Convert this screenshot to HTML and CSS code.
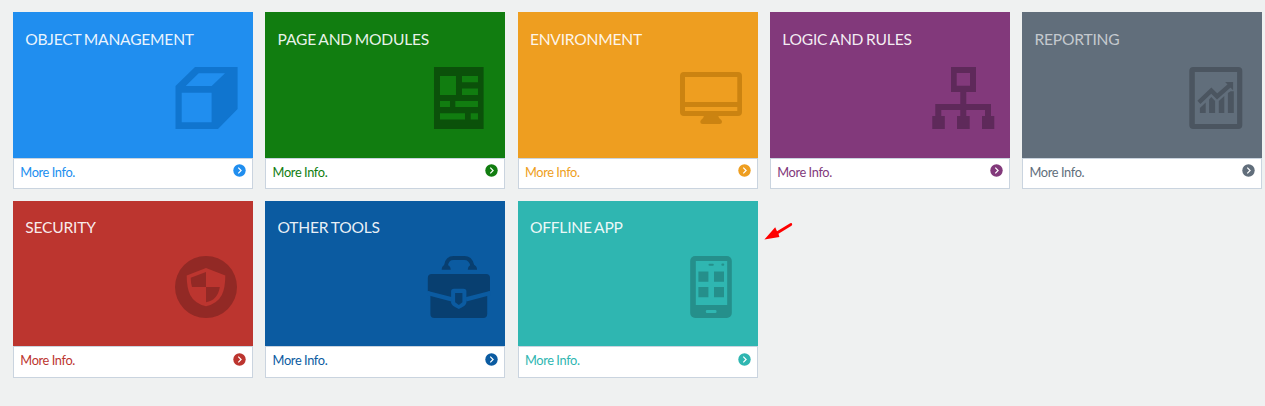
FILE: index.html
```html
<!DOCTYPE html>
<html lang="en">
<head>
<meta charset="utf-8">
<title>Dashboard</title>
<link rel="stylesheet" href="styles.css">
</head>
<body>
<svg class="defs" width="0" height="0"><symbol id="go" viewBox="0 0 13 13"><circle cx="6.5" cy="6.5" r="6.2" fill="currentColor"/><path d="M5.3 3.7 8.1 6.5 5.3 9.3" fill="none" stroke="#fff" stroke-width="1.2"/></symbol></svg>
<main class="tiles">
  <section class="tile blue">
    <div class="face"><h2>OBJECT MANAGEMENT</h2>
      <svg class="icon" viewBox="0 0 62 62"><path fill-rule="evenodd" d="M20 0H62.6V42L43 62H.5V19ZM23.7 6.3 10.7 19H36.7L50 6.3ZM6.7 25.7V55.3H36.6V25.7Z"/></svg>
    </div>
    <a class="more"><span>More Info.</span><svg class="go"><use href="#go"/></svg></a>
  </section>
  <section class="tile green">
    <div class="face"><h2>PAGE AND MODULES</h2>
      <svg class="icon" viewBox="-.3 0 62 62"><path fill-rule="evenodd" d="M6.7 0h49.6v62h-49.6ZM12.7 9v19h16V9ZM34.7 9v6.3h16V9ZM34.7 21.6v6.3h16v-6.3ZM12.7 34v6h10v-6ZM28 34v6h22.7v-6ZM12.7 46.3v6.3h25v-6.3ZM43.4 46.3v6.3h7.3v-6.3Z"/></svg>
    </div>
    <a class="more"><span>More Info.</span><svg class="go"><use href="#go"/></svg></a>
  </section>
  <section class="tile orange">
    <div class="face"><h2>ENVIRONMENT</h2>
      <svg class="icon" viewBox=".4 0 62 62"><path fill-rule="evenodd" d="M4.4 5H58.4a4 4 0 0 1 4 4V45a4 4 0 0 1-4 4H4.4a4 4 0 0 1-4-4V9a4 4 0 0 1 4-4ZM5.4 10V35H57.7V10ZM5.4 40v4H57.7v-4Z"/><path d="M24.3 49H38.7Q39 51.5 41.4 52.7 42.4 53.5 42.4 55 42.3 57 40 57H23Q20.7 57 20.7 55 20.7 53.5 21.7 52.7 24 51.5 24.3 49Z"/></svg>
    </div>
    <a class="more"><span>More Info.</span><svg class="go"><use href="#go"/></svg></a>
  </section>
  <section class="tile purple">
    <div class="face"><h2>LOGIC AND RULES</h2>
      <svg class="icon" viewBox="0 0 62 62"><path fill-rule="evenodd" d="M19 0H44V25H34.3V37H59V49H62.3V62H50V49H53V43H34.3V49H37.7V62H25V49H28.3V43H9.3V49H12.8V62H.3V49H3.3V37H28.3V25H19ZM24.7 6V18.7H38V6Z"/></svg>
    </div>
    <a class="more"><span>More Info.</span><svg class="go"><use href="#go"/></svg></a>
  </section>
  <section class="tile slate">
    <div class="face"><h2>REPORTING</h2>
      <svg class="icon" viewBox="-.3 0 62 62"><path fill-rule="evenodd" d="M9 0H54a4 4 0 0 1 4 4V58a4 4 0 0 1-4 4H9a4 4 0 0 1-4-4V4a4 4 0 0 1 4-4ZM10.5 5V57H52.8V5Z"/><path d="M15.6 41 21.4 35.5V46H15.6ZM24.8 32.5 27 30 30.8 34V46H24.8ZM34.5 34 40 29V46H34.5ZM43.6 26 46.3 24.2H49.5V46H43.6ZM40.8 15H48.8V23.3Z"/><path class="line" stroke-width="4.4" d="M14.6 35.3 27 23.6 32.8 29.4 46 17.8"/></svg>
    </div>
    <a class="more"><span>More Info.</span><svg class="go"><use href="#go"/></svg></a>
  </section>
  <section class="tile red">
    <div class="face"><h2>SECURITY</h2>
      <svg class="icon" viewBox="0 0 62 62"><circle cx="31" cy="31" r="31"/><path class="cut" d="M31 12 50.3 19.5Q50.3 32 46.8 39 42.5 47.5 31 50.3 19.5 47.5 15.2 39 11.7 32 11.7 19.5Z"/><path d="M31 16V31H17Q15.8 27 15.7 21.8ZM31 31H44.8Q42.8 44.2 31 46.3Z"/></svg>
    </div>
    <a class="more"><span>More Info.</span><svg class="go"><use href="#go"/></svg></a>
  </section>
  <section class="tile navy">
    <div class="face"><h2>OTHER TOOLS</h2>
      <svg class="icon" viewBox="-.4 0 62 62"><path d="M4.4 18H58.6a4 4 0 0 1 4 4V35L59.8 36V58a4 4 0 0 1-4 4H7a4 4 0 0 1-4-4V36L.4 35V22a4 4 0 0 1 4-4Z"/><path class="cutline" stroke-width="4.2" d="M0 37 24.5 43.4M38.5 43.4 63 37"/><path class="cut" d="M26.5 32.7H36.3Q39 32.7 39 35.5V46.5Q39 49.5 31.4 53 23.7 49.5 23.7 46.5V35.5Q23.7 32.7 26.5 32.7Z"/><path d="M27.7 37H35V46.3L31.4 49 27.7 46.3Z"/><path class="line" stroke-width="3.8" d="M18.7 11V9Q20 2 26 2H37Q43 2 44.8 9V11"/><path d="M14.3 13.7Q14.3 9 18.5 8.4 23.3 9 23.3 13.7ZM40.4 13.7Q40.4 9 45 8.4 49.7 9 49.7 13.7Z"/></svg>
    </div>
    <a class="more"><span>More Info.</span><svg class="go"><use href="#go"/></svg></a>
  </section>
  <section class="tile teal">
    <div class="face"><h2>OFFLINE APP</h2>
      <svg class="icon" viewBox=".2 0 62 62"><rect x="10.4" width="41.6" height="62" rx="5"/><path class="cut" d="M16 5H47.4V49H16Z"/><rect x="28.7" y="7.7" width="5.3" height="2" rx="1"/><rect x="41.6" y="7.6" width="2.8" height="2.2" rx="1"/><path d="M18.6 15.4h10v10.4h-10ZM34.2 15.4h10v10.4h-10ZM18.6 31h10v10.3h-10ZM34.2 31h10v10.3h-10Z"/><rect class="cut" x="26" y="54" width="10.7" height="3" rx="1.2"/></svg>
    </div>
    <a class="more"><span>More Info.</span><svg class="go"><use href="#go"/></svg></a>
    <svg class="pointer" viewBox="0 0 30 20"><path d="M.4 17.5 11.2 5.3 13 9.2 26.2 1.2Q28 .6 28.2 2.3 28.2 3.2 27.5 3.7L14.5 11.7 15.4 15Z"/></svg>
  </section>
</main>
</body>
</html>
```

FILE: styles.css
```css
* { box-sizing: border-box; }
body { margin: 0; background: #eff1f1; font-family: Lato, sans-serif; overflow: hidden; }
.defs { position: absolute; }
.tiles { display: grid; grid-template-columns: repeat(5, 240px); column-gap: 12.3px; row-gap: 11.6px; padding: 12px 0 0 13px; }
.tile { position: relative; height: 177px; display: flex; flex-direction: column; color: var(--c); }
.face { height: 145.6px; background: var(--c); padding: 16.6px 16px 0 12.3px; display: flex; flex-direction: column; }
h2 { margin: 0; height: 38.4px; font-size: 15.6px; line-height: 20px; font-weight: 400; letter-spacing: -.22px; word-spacing: -.9px; color: rgba(255,255,255,.92); white-space: nowrap; }
.icon { width: 62px; height: 62px; align-self: flex-end; fill: var(--d); overflow: visible; }
.line { fill: none; stroke: var(--d); }
.cut { fill: var(--c); }
.cutline { fill: none; stroke: var(--c); }
.more { flex: 1; display: flex; justify-content: space-between; background: #fff; border: 1px solid #cad4df; padding: 4.7px 6px 0 6.3px; font-size: 12.8px; line-height: 18px; letter-spacing: -.35px; word-spacing: -.2px; }
.more span { margin-top: -.65px; }
.go { width: 13px; height: 13px; margin-top: 1px; }
.blue { --c: #208eef; --d: #1075cf; }
.green { --c: #117d10; --d: #0b510a; }
.orange { --c: #ee9e20; --d: #cb8311; }
.purple { --c: #82397b; --d: #5e295a; }
.slate { --c: #616e7b; --d: #4b5560; }
.slate h2 { color: #c4c9ce; }
.red { --c: #bc352f; --d: #922925; }
.navy { --c: #0b5ba1; --d: #083f70; }
.teal { --c: #2fb6b1; --d: #258f8b; }
.pointer { position: absolute; left: 246px; top: 21.4px; width: 30px; height: 20px; fill: #fe0000; }
```
